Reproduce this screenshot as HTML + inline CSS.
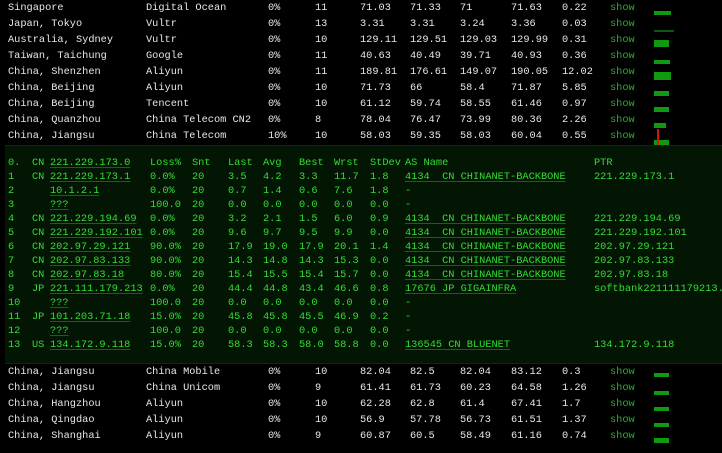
<!DOCTYPE html>
<html><head><meta charset="utf-8"><style>
body{margin:0;width:722px;height:453px;background:#000;overflow:hidden;position:relative;font-family:"Liberation Mono",monospace;font-size:10.3px;color:#e8e8e8}
.r{position:absolute;left:0;width:722px;height:16px;line-height:17px}
.r span{position:absolute;white-space:pre}
.r span:nth-child(1){left:8px}.r span:nth-child(2){left:146px}.r span:nth-child(3){left:268px}.r span:nth-child(4){left:315px}.r span:nth-child(5){left:360px}.r span:nth-child(6){left:410px}.r span:nth-child(7){left:460px}.r span:nth-child(8){left:511px}.r span:nth-child(9){left:562px}.r span:nth-child(10){left:610px;color:#1fb61f}
.bar{position:absolute;background:#109a10;left:654px}
#panel{position:absolute;left:5px;top:145px;width:717px;height:217px;background:#031603;border-top:1px solid #0b2a0b;border-bottom:1px solid #0b2a0b;color:#33dd33;overflow:hidden}
.p{position:absolute;left:0;height:14px;line-height:14px;width:717px}
.p span{position:absolute;white-space:pre}
.p span:nth-child(1){left:3px}.p span:nth-child(2){left:27px}.p span:nth-child(3){left:45px}.p span:nth-child(4){left:145px}.p span:nth-child(5){left:187px}.p span:nth-child(6){left:223px}.p span:nth-child(7){left:258px}.p span:nth-child(8){left:294px}.p span:nth-child(9){left:329px}.p span:nth-child(10){left:365px}.p span:nth-child(11){left:400px}.p span:nth-child(12){left:589px}
.u{text-decoration:underline;text-decoration-color:#1f5a1f;text-underline-offset:2px}
</style></head><body>
<div class="r" style="top:0"><span>Singapore</span><span>Digital Ocean</span><span>0%</span><span>11</span><span>71.03</span><span>71.33</span><span>71</span><span>71.63</span><span>0.22</span><span>show</span></div>
<div class="r" style="top:16px"><span>Japan, Tokyo</span><span>Vultr</span><span>0%</span><span>13</span><span>3.31</span><span>3.31</span><span>3.24</span><span>3.36</span><span>0.03</span><span>show</span></div>
<div class="r" style="top:32px"><span>Australia, Sydney</span><span>Vultr</span><span>0%</span><span>10</span><span>129.11</span><span>129.51</span><span>129.03</span><span>129.99</span><span>0.31</span><span>show</span></div>
<div class="r" style="top:48px"><span>Taiwan, Taichung</span><span>Google</span><span>0%</span><span>11</span><span>40.63</span><span>40.49</span><span>39.71</span><span>40.93</span><span>0.36</span><span>show</span></div>
<div class="r" style="top:64px"><span>China, Shenzhen</span><span>Aliyun</span><span>0%</span><span>11</span><span>189.81</span><span>176.61</span><span>149.07</span><span>190.05</span><span>12.02</span><span>show</span></div>
<div class="r" style="top:80px"><span>China, Beijing</span><span>Aliyun</span><span>0%</span><span>10</span><span>71.73</span><span>66</span><span>58.4</span><span>71.87</span><span>5.85</span><span>show</span></div>
<div class="r" style="top:96px"><span>China, Beijing</span><span>Tencent</span><span>0%</span><span>10</span><span>61.12</span><span>59.74</span><span>58.55</span><span>61.46</span><span>0.97</span><span>show</span></div>
<div class="r" style="top:112px"><span>China, Quanzhou</span><span>China Telecom CN2</span><span>0%</span><span>8</span><span>78.04</span><span>76.47</span><span>73.99</span><span>80.36</span><span>2.26</span><span>show</span></div>
<div class="r" style="top:128px"><span>China, Jiangsu</span><span>China Telecom</span><span>10%</span><span>10</span><span>58.03</span><span>59.35</span><span>58.03</span><span>60.04</span><span>0.55</span><span>show</span></div>

<div class="r" style="top:364px"><span>China, Jiangsu</span><span>China Mobile</span><span>0%</span><span>10</span><span>82.04</span><span>82.5</span><span>82.04</span><span>83.12</span><span>0.3</span><span>show</span></div>
<div class="r" style="top:380px"><span>China, Jiangsu</span><span>China Unicom</span><span>0%</span><span>9</span><span>61.41</span><span>61.73</span><span>60.23</span><span>64.58</span><span>1.26</span><span>show</span></div>
<div class="r" style="top:396px"><span>China, Hangzhou</span><span>Aliyun</span><span>0%</span><span>10</span><span>62.28</span><span>62.8</span><span>61.4</span><span>67.41</span><span>1.7</span><span>show</span></div>
<div class="r" style="top:412px"><span>China, Qingdao</span><span>Aliyun</span><span>0%</span><span>10</span><span>56.9</span><span>57.78</span><span>56.73</span><span>61.51</span><span>1.37</span><span>show</span></div>
<div class="r" style="top:428px"><span>China, Shanghai</span><span>Aliyun</span><span>0%</span><span>9</span><span>60.87</span><span>60.5</span><span>58.49</span><span>61.16</span><span>0.74</span><span>show</span></div>

<div class="bar" style="top:11px;width:17px;height:4px"></div>
<div class="bar" style="top:30px;width:20px;height:2px;background:#0a5a0a"></div>
<div class="bar" style="top:40px;width:15px;height:7px"></div>
<div class="bar" style="top:60px;width:16px;height:4px"></div>
<div class="bar" style="top:72px;width:17px;height:8px"></div>
<div class="bar" style="top:91px;width:15px;height:5px"></div>
<div class="bar" style="top:107px;width:15px;height:5px"></div>
<div class="bar" style="top:123px;width:12px;height:5px"></div>
<div class="bar" style="top:140px;width:15px;height:5px"></div>
<div style="position:absolute;left:657px;top:129px;width:2px;height:16px;background:#e01010"></div>
<div class="bar" style="top:373px;width:15px;height:4px"></div>
<div class="bar" style="top:391px;width:15px;height:4px"></div>
<div class="bar" style="top:407px;width:15px;height:4px"></div>
<div class="bar" style="top:423px;width:15px;height:4px"></div>
<div class="bar" style="top:438px;width:15px;height:5px"></div>

<div id="panel">
<div class="p" style="top:10px"><span>0.</span><span>CN</span><span class="u">221.229.173.0</span><span>Loss%</span><span>Snt</span><span>Last</span><span>Avg</span><span>Best</span><span>Wrst</span><span>StDev</span><span>AS Name</span><span>PTR</span></div>
<div class="p" style="top:24px"><span>1</span><span>CN</span><span class="u">221.229.173.1</span><span>0.0%</span><span>20</span><span>3.5</span><span>4.2</span><span>3.3</span><span>11.7</span><span>1.8</span><span class="u">4134  CN CHINANET-BACKBONE</span><span>221.229.173.1</span></div>
<div class="p" style="top:38px"><span>2</span><span></span><span class="u">10.1.2.1</span><span>0.0%</span><span>20</span><span>0.7</span><span>1.4</span><span>0.6</span><span>7.6</span><span>1.8</span><span>-</span><span></span></div>
<div class="p" style="top:52px"><span>3</span><span></span><span class="u">???</span><span>100.0</span><span>20</span><span>0.0</span><span>0.0</span><span>0.0</span><span>0.0</span><span>0.0</span><span>-</span><span></span></div>
<div class="p" style="top:66px"><span>4</span><span>CN</span><span class="u">221.229.194.69</span><span>0.0%</span><span>20</span><span>3.2</span><span>2.1</span><span>1.5</span><span>6.0</span><span>0.9</span><span class="u">4134  CN CHINANET-BACKBONE</span><span>221.229.194.69</span></div>
<div class="p" style="top:80px"><span>5</span><span>CN</span><span class="u">221.229.192.101</span><span>0.0%</span><span>20</span><span>9.6</span><span>9.7</span><span>9.5</span><span>9.9</span><span>0.0</span><span class="u">4134  CN CHINANET-BACKBONE</span><span>221.229.192.101</span></div>
<div class="p" style="top:94px"><span>6</span><span>CN</span><span class="u">202.97.29.121</span><span>90.0%</span><span>20</span><span>17.9</span><span>19.0</span><span>17.9</span><span>20.1</span><span>1.4</span><span class="u">4134  CN CHINANET-BACKBONE</span><span>202.97.29.121</span></div>
<div class="p" style="top:108px"><span>7</span><span>CN</span><span class="u">202.97.83.133</span><span>90.0%</span><span>20</span><span>14.3</span><span>14.8</span><span>14.3</span><span>15.3</span><span>0.0</span><span class="u">4134  CN CHINANET-BACKBONE</span><span>202.97.83.133</span></div>
<div class="p" style="top:122px"><span>8</span><span>CN</span><span class="u">202.97.83.18</span><span>80.0%</span><span>20</span><span>15.4</span><span>15.5</span><span>15.4</span><span>15.7</span><span>0.0</span><span class="u">4134  CN CHINANET-BACKBONE</span><span>202.97.83.18</span></div>
<div class="p" style="top:136px"><span>9</span><span>JP</span><span class="u">221.111.179.213</span><span>0.0%</span><span>20</span><span>44.4</span><span>44.8</span><span>43.4</span><span>46.6</span><span>0.8</span><span class="u">17676 JP GIGAINFRA</span><span>softbank221111179213.b</span></div>
<div class="p" style="top:150px"><span>10</span><span></span><span class="u">???</span><span>100.0</span><span>20</span><span>0.0</span><span>0.0</span><span>0.0</span><span>0.0</span><span>0.0</span><span>-</span><span></span></div>
<div class="p" style="top:164px"><span>11</span><span>JP</span><span class="u">101.203.71.18</span><span>15.0%</span><span>20</span><span>45.8</span><span>45.8</span><span>45.5</span><span>46.9</span><span>0.2</span><span>-</span><span></span></div>
<div class="p" style="top:178px"><span>12</span><span></span><span class="u">???</span><span>100.0</span><span>20</span><span>0.0</span><span>0.0</span><span>0.0</span><span>0.0</span><span>0.0</span><span>-</span><span></span></div>
<div class="p" style="top:192px"><span>13</span><span>US</span><span class="u">134.172.9.118</span><span>15.0%</span><span>20</span><span>58.3</span><span>58.3</span><span>58.0</span><span>58.8</span><span>0.0</span><span class="u">136545 CN BLUENET</span><span>134.172.9.118</span></div>
</div>
</body></html>
